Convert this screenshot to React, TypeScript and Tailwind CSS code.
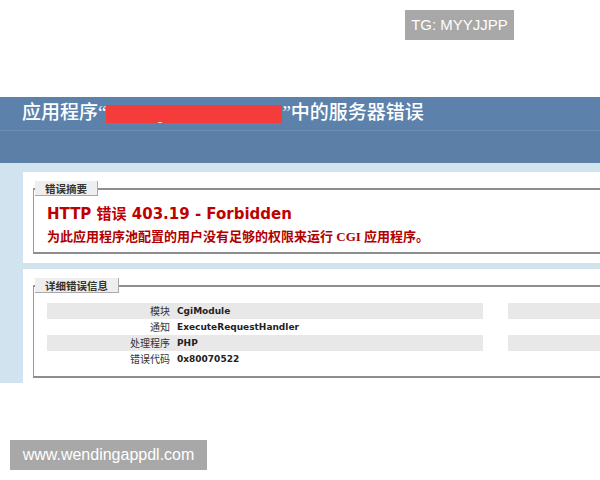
import React from 'react';

const cjk = "'Noto Sans CJK SC', sans-serif";
const verd = "'DejaVu Sans', 'Noto Sans CJK SC', sans-serif";

const details = [
  { label: '模块', value: 'CgiModule' },
  { label: '通知', value: 'ExecuteRequestHandler' },
  { label: '处理程序', value: 'PHP' },
  { label: '错误代码', value: '0x80070522' },
];

function Legend({ text }: { text: string }) {
  return (
    <legend
      className="ml-[1px] h-[15px] px-[10px] bg-[#eeeeee] border-r border-b border-[#a9a9a9] text-[10.5px] leading-[15px] font-bold text-[#333]"
      style={{ fontFamily: cjk }}
    >
      {text}
    </legend>
  );
}

export default function App() {
  return (
    <div className="relative w-[600px] h-[480px] overflow-hidden bg-white">
      {/* watermarks */}
      <div
        className="absolute top-[10px] left-[405px] w-[109px] h-[30px] bg-[#a8a8a8] text-white text-[15px] flex items-center justify-center"
        style={{ fontFamily: "'Liberation Sans', sans-serif" }}
      >
        TG: MYYJJPP
      </div>
      <div
        className="absolute top-[440px] left-[10px] w-[197px] h-[30px] bg-[#a8a8a8] text-white text-[16px] flex items-center justify-center z-10"
        style={{ fontFamily: "'Liberation Sans', sans-serif" }}
      >
        www.wendingappdl.com
      </div>

      <div className="h-[97px]" />

      {/* header */}
      <div
        className="h-[33px] bg-[#5c82ac] pl-[22px] flex items-center text-white text-[19px] font-medium"
        style={{ fontFamily: "'Liberation Serif', 'Noto Sans CJK SC', serif" }}
      >
        <span>应用程序“</span>
        <span className="w-[176px] h-[18px] bg-[#f63b3b] flex items-end pl-[52px]">
          <span className="w-[4px] h-[1px] bg-white/80" />
        </span>
        <span>”中的服务器错误</span>
      </div>
      <div className="h-[33px] bg-[#5b7fa6] border-t border-[#6a8db3]" />

      {/* body */}
      <div className="bg-[#d1e3ef] pl-[23px] pt-[9px] flex flex-col gap-[6px] w-[700px]">
        <div className="bg-white pl-[10px] pt-[9px] pb-[9px]">
          <fieldset className="border-l border-t-2 border-b-2 border-[#8e8e8e] border-l-[#9a9a9a]">
            <Legend text="错误摘要" />
            <div className="pl-[13px] pt-[8px] pb-[6px] text-[#bf0000]">
              <div className="text-[15px] leading-[20px] font-bold" style={{ fontFamily: verd }}>
                HTTP 错误 403.19 - Forbidden
              </div>
              <div
                className="text-[13px] leading-[18px] font-bold mt-[4px] text-[#b00000]"
                style={{ fontFamily: "'Liberation Serif', 'Noto Sans CJK SC', serif" }}
              >
                为此应用程序池配置的用户没有足够的权限来运行 CGI 应用程序。
              </div>
            </div>
          </fieldset>
        </div>

        <div className="bg-white pl-[10px] pt-[9px] pb-[5px]">
          <fieldset className="border-l border-t-2 border-b-2 border-[#8e8e8e] border-l-[#9a9a9a]">
            <Legend text="详细错误信息" />
            <div className="pl-[13px] pt-[10px] pb-[9px] flex gap-[25px]">
              <div className="w-[436px] flex flex-col">
                {details.map((d, i) => (
                  <div
                    key={d.label}
                    className={`h-[16px] flex items-center ${i % 2 === 0 ? 'bg-[#e8e8e8]' : ''}`}
                  >
                    <span
                      className="w-[128px] pr-[5px] text-right text-[10px] leading-[16px] text-[#333]"
                      style={{ fontFamily: cjk }}
                    >
                      {d.label}
                    </span>
                    <span
                      className="pl-[2px] text-[9px] leading-[16px] font-bold text-[#222]"
                      style={{ fontFamily: verd }}
                    >
                      {d.value}
                    </span>
                  </div>
                ))}
              </div>
              <div className="w-[200px] flex flex-col">
                {details.map((d, i) => (
                  <div key={d.label} className={`h-[16px] ${i % 2 === 0 ? 'bg-[#e8e8e8]' : ''}`} />
                ))}
              </div>
            </div>
          </fieldset>
        </div>
      </div>
    </div>
  );
}
